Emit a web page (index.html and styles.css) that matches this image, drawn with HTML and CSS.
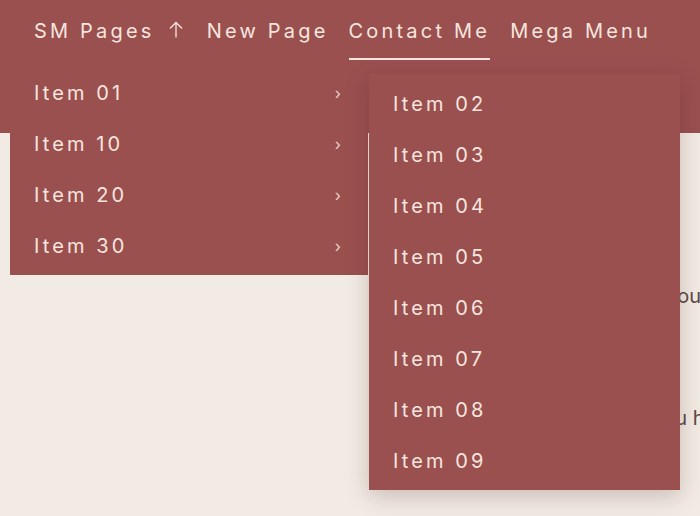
FILE: index.html
```html
<!DOCTYPE html>
<html lang="en">
<head>
    <meta charset="UTF-8">
    <meta name="viewport" content="width=device-width, initial-scale=1.0">
    <title>Contact Me</title>
    <link rel="stylesheet" href="styles.css">
</head>
<body>
    <header class="site-header">
        <nav>
            <ul class="menu">
                <li class="menu-item has-sub">
                    <a href="#">SM Pages
                        <svg class="arrow-up" width="14" height="17" viewBox="0 0 14 17"><path d="M7 16.5V1.5M1 7.5L7 1.5 13 7.5" fill="none" stroke="currentColor" stroke-width="1.3"/></svg>
                    </a>
                    <ul class="sub-menu">
                        <li class="sub-item open">
                            <a href="#">Item 01 <span class="chev">›</span></a>
                            <ul class="sub-menu deep">
                                <li><a href="#">Item 02</a></li>
                                <li><a href="#">Item 03</a></li>
                                <li><a href="#">Item 04</a></li>
                                <li><a href="#">Item 05</a></li>
                                <li><a href="#">Item 06</a></li>
                                <li><a href="#">Item 07</a></li>
                                <li><a href="#">Item 08</a></li>
                                <li><a href="#">Item 09</a></li>
                            </ul>
                        </li>
                        <li class="sub-item"><a href="#">Item 10 <span class="chev">›</span></a></li>
                        <li class="sub-item"><a href="#">Item 20 <span class="chev">›</span></a></li>
                        <li class="sub-item"><a href="#">Item 30 <span class="chev">›</span></a></li>
                    </ul>
                </li>
                <li class="menu-item"><a href="#">New Page</a></li>
                <li class="menu-item current"><a href="#">Contact Me</a></li>
                <li class="menu-item"><a href="#">Mega Menu</a></li>
            </ul>
        </nav>
    </header>

    <main class="content">
        <p class="line-one">I would love to hear from you</p>
        <p class="line-two">Whatever question you have</p>
    </main>
</body>
</html>
```

FILE: styles.css
```css
body {
    margin: 0;
    background-color: #f2ebe4;
    font-family: "Inter", "Open Sans", sans-serif;
    overflow: hidden;
    height: 516px;
}

a {
    color: inherit;
    text-decoration: none;
}

ul {
    margin: 0;
    padding: 0;
    list-style: none;
}

.site-header {
    background-color: #9b5050;
    height: 133px;
    color: #f7e6df;
}

.menu {
    display: flex;
    gap: 20px;
    padding: 19px 0 0 34px;
    position: relative;
}

.menu-item > a {
    display: flex;
    align-items: center;
    gap: 14px;
    font-size: 20px;
    letter-spacing: 3.2px;
    padding-bottom: 15px;
    border-bottom: 2px solid transparent;
}

.menu-item.has-sub {
    margin-right: 4px;
}

.menu-item.current > a {
    border-bottom-color: #f7e6df;
}

.arrow-up {
    margin-top: -3px;
}

.sub-menu {
    position: absolute;
    left: 10px;
    top: 63px;
    width: 358px;
    padding: 4px 0;
    background-color: #9b5050;
}

.sub-item {
    position: relative;
}

.sub-menu a {
    display: flex;
    justify-content: space-between;
    align-items: center;
    height: 51px;
    padding: 0 24px;
    font-size: 20px;
    letter-spacing: 3.1px;
}

.chev {
    font-size: 16px;
    letter-spacing: 0;
    opacity: 0.85;
    padding-right: 3px;
}

.sub-menu.deep {
    left: 359px;
    top: 7px;
    width: 311px;
    box-shadow: 0 6px 22px rgba(60, 20, 20, 0.22);
}

.content {
    padding-top: 151px;
    width: 700px;
    color: #5b4a47;
    font-size: 20px;
}

.content p {
    white-space: nowrap;
    text-align: right;
    margin: 0 0 98px;
}

.line-one {
    margin-right: -1px !important;
}

.line-two {
    margin-right: -38px !important;
}
```
